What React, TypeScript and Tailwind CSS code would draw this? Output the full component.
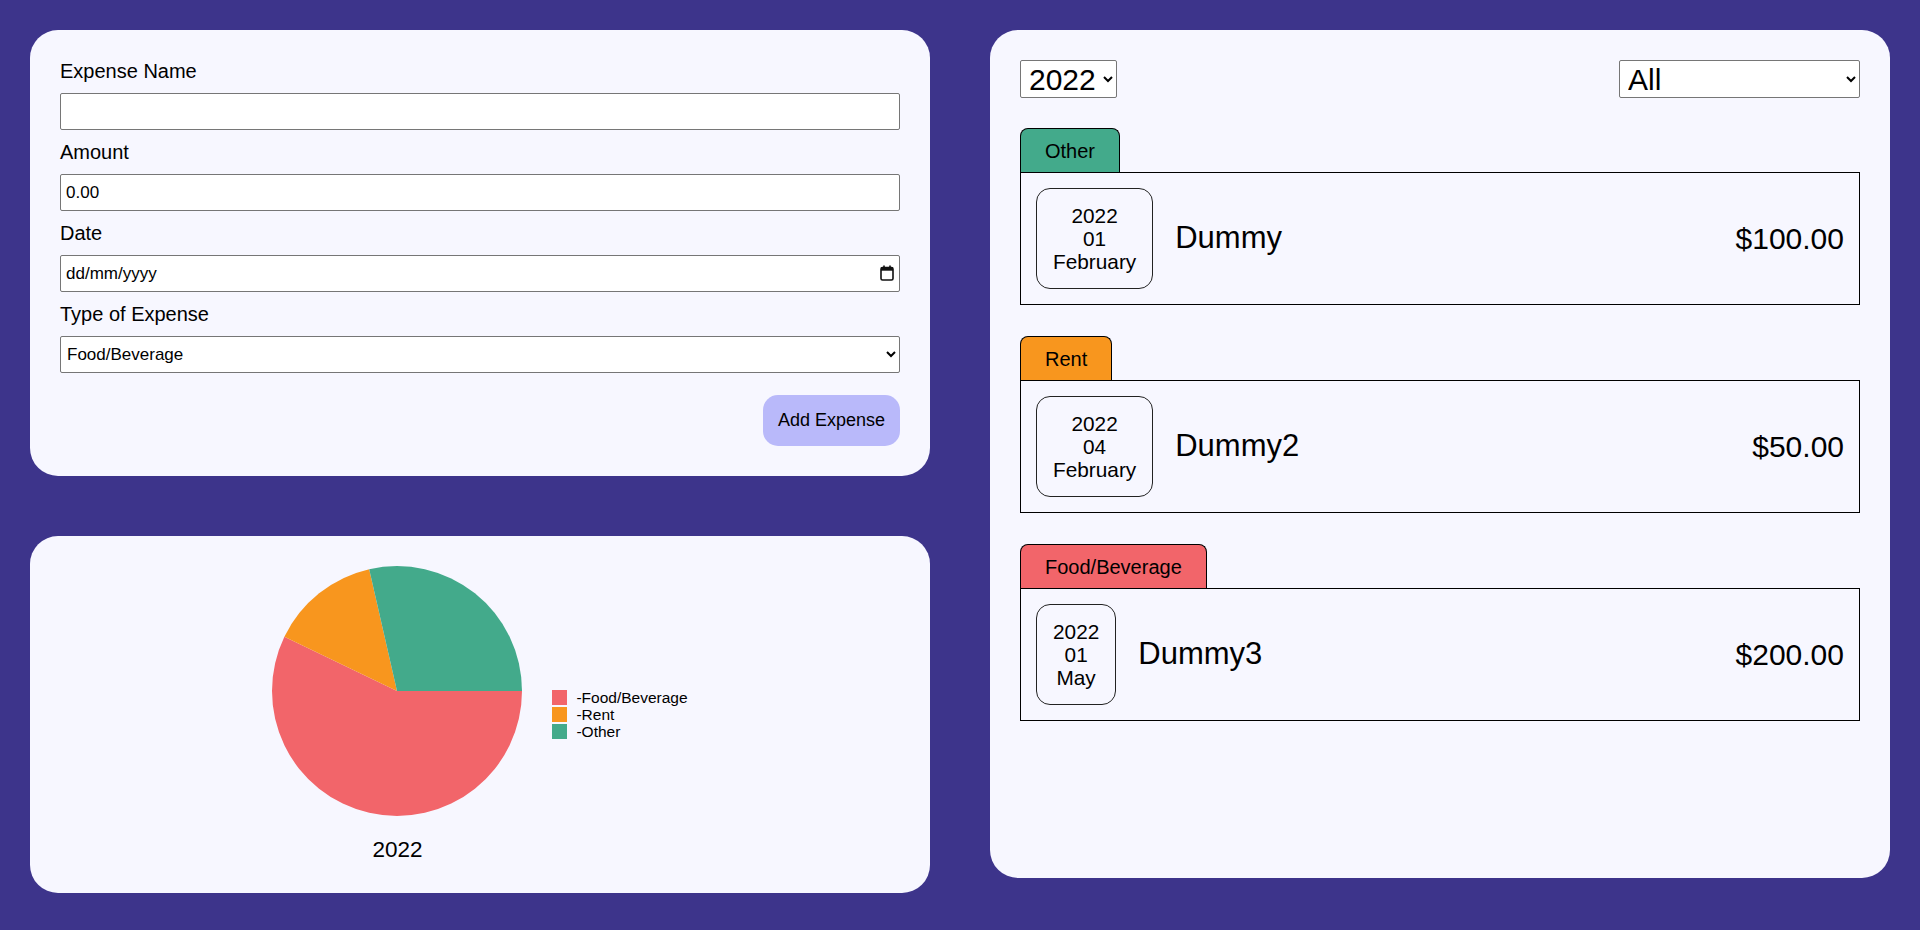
import { useState } from "react";

type Expense = {
  id: number;
  title: string;
  amount: number;
  year: string;
  day: string;
  month: string;
  category: string;
};

const COLORS: Record<string, string> = {
  "Food/Beverage": "#f2656a",
  Rent: "#f8961e",
  Other: "#43aa8b",
};

const EXPENSES: Expense[] = [
  { id: 1, title: "Dummy", amount: 100, year: "2022", day: "01", month: "February", category: "Other" },
  { id: 2, title: "Dummy2", amount: 50, year: "2022", day: "04", month: "February", category: "Rent" },
  { id: 3, title: "Dummy3", amount: 200, year: "2022", day: "01", month: "May", category: "Food/Beverage" },
];

const tabBg: Record<string, string> = {
  "Food/Beverage": "bg-[#f2656a]",
  Rent: "bg-[#f8961e]",
  Other: "bg-[#43aa8b]",
};

function CalendarIcon() {
  return (
    <svg width="14" height="16" viewBox="0 0 14 16" fill="none">
      <rect x="1" y="2.5" width="12" height="12.5" rx="1.5" stroke="#111" strokeWidth="1.6" />
      <rect x="1" y="2.5" width="12" height="3.2" fill="#111" />
      <rect x="3.2" y="0.5" width="1.6" height="3" fill="#111" />
      <rect x="9.2" y="0.5" width="1.6" height="3" fill="#111" />
    </svg>
  );
}

function Field({ label, children }: { label: string; children: React.ReactNode }) {
  return (
    <div className="flex flex-col">
      <label className="text-[20px] leading-[23px] mb-[10px]">{label}</label>
      {children}
    </div>
  );
}

function ExpenseForm() {
  const [name, setName] = useState("");
  const [amount, setAmount] = useState("0.00");
  const inputCls =
    "h-[37px] w-full bg-white border border-[#767676] rounded-[2px] px-[5px] text-[17px] outline-none";

  return (
    <div className="bg-[#f7f7ff] rounded-[28px] p-[30px] flex flex-col gap-[11px]">
      <Field label="Expense Name">
        <input className={inputCls} value={name} onChange={(e) => setName(e.target.value)} />
      </Field>
      <Field label="Amount">
        <input className={inputCls} value={amount} onChange={(e) => setAmount(e.target.value)} />
      </Field>
      <Field label="Date">
        <div className="relative">
          <input className={inputCls + " placeholder:text-black"} placeholder="dd/mm/yyyy" />
          <div className="absolute right-[6px] top-[10px] pointer-events-none">
            <CalendarIcon />
          </div>
        </div>
      </Field>
      <Field label="Type of Expense">
        <select className="h-[37px] w-full bg-white border border-[#767676] rounded-[2px] px-[2px] text-[17px]">
          <option>Food/Beverage</option>
          <option>Rent</option>
          <option>Other</option>
        </select>
      </Field>
      <div className="flex justify-end mt-[11px]">
        <button className="h-[51px] px-[15px] rounded-[15px] bg-[#b9b9fa] text-[18px]">Add Expense</button>
      </div>
    </div>
  );
}

function PieChart() {
  const data = [
    { name: "Food/Beverage", value: 200 },
    { name: "Rent", value: 50 },
    { name: "Other", value: 100 },
  ];
  const total = data.reduce((s, d) => s + d.value, 0);
  const r = 125;
  let start = 0;
  const slices = data.map((d) => {
    const angle = (d.value / total) * Math.PI * 2;
    const end = start + angle;
    const x1 = r + r * Math.cos(start);
    const y1 = r + r * Math.sin(start);
    const x2 = r + r * Math.cos(end);
    const y2 = r + r * Math.sin(end);
    const large = angle > Math.PI ? 1 : 0;
    const path = `M ${r} ${r} L ${x1} ${y1} A ${r} ${r} 0 ${large} 1 ${x2} ${y2} Z`;
    start = end;
    return { path, color: COLORS[d.name], name: d.name };
  });

  return (
    <div className="bg-[#f7f7ff] rounded-[28px] p-[30px] flex justify-center items-center gap-[30px]">
      <div className="flex flex-col items-center">
        <svg width="250" height="250" viewBox="0 0 250 250">
          {slices.map((s) => (
            <path key={s.name} d={s.path} fill={s.color} />
          ))}
        </svg>
        <div className="mt-[20px] text-[22.5px] leading-[27px]">2022</div>
      </div>
      <div className="flex flex-col gap-[2px]">
        {data.map((d) => (
          <div key={d.name} className="flex items-center gap-[9px] h-[15px]">
            <span className="w-[15px] h-[15px]" style={{ backgroundColor: COLORS[d.name] }} />
            <span className="text-[15.5px] leading-[15px]">-{d.name}</span>
          </div>
        ))}
      </div>
    </div>
  );
}

function ExpenseItem({ e }: { e: Expense }) {
  return (
    <div className="flex flex-col">
      <div
        className={`self-start h-[44px] px-6 flex items-center text-[20px] border border-black border-b-0 rounded-t-[8px] ${tabBg[e.category]}`}
      >
        {e.category}
      </div>
      <div className="border border-black p-[15px] flex items-center">
        <div className="border border-[#222] rounded-[14px] px-[16px] py-[15px] text-center text-[20.8px] leading-[23px]">
          <div>{e.year}</div>
          <div>{e.day}</div>
          <div>{e.month}</div>
        </div>
        <div className="ml-[22px] text-[31px]">{e.title}</div>
        <div className="ml-auto text-[30px]">${e.amount.toFixed(2)}</div>
      </div>
    </div>
  );
}

function ExpenseList() {
  const [year, setYear] = useState("2022");
  const [filter, setFilter] = useState("All");
  return (
    <div className="bg-[#f7f7ff] rounded-[28px] p-[30px] h-[848px] flex flex-col">
      <div className="flex justify-between">
        <select
          value={year}
          onChange={(ev) => setYear(ev.target.value)}
          className="h-[38px] bg-white border border-[#767676] rounded-[2px] px-[4px] text-[30px] leading-[34px]"
        >
          <option>2022</option>
          <option>2021</option>
          <option>2020</option>
        </select>
        <select
          value={filter}
          onChange={(ev) => setFilter(ev.target.value)}
          className="h-[38px] w-[241px] bg-white border border-[#767676] rounded-[2px] px-[4px] text-[30px] leading-[34px]"
        >
          <option>All</option>
          <option>Food/Beverage</option>
          <option>Rent</option>
          <option>Other</option>
        </select>
      </div>
      <div className="mt-[30px] flex flex-col gap-[31px]">
        {EXPENSES.map((e) => (
          <ExpenseItem key={e.id} e={e} />
        ))}
      </div>
    </div>
  );
}

export default function App() {
  return (
    <div className="min-h-screen bg-[#3d348b] p-[30px] font-['Liberation_Sans',Arial,sans-serif] text-black">
      <div className="grid grid-cols-2 gap-x-[60px] items-start">
        <div className="flex flex-col gap-[60px]">
          <ExpenseForm />
          <PieChart />
        </div>
        <ExpenseList />
      </div>
    </div>
  );
}
